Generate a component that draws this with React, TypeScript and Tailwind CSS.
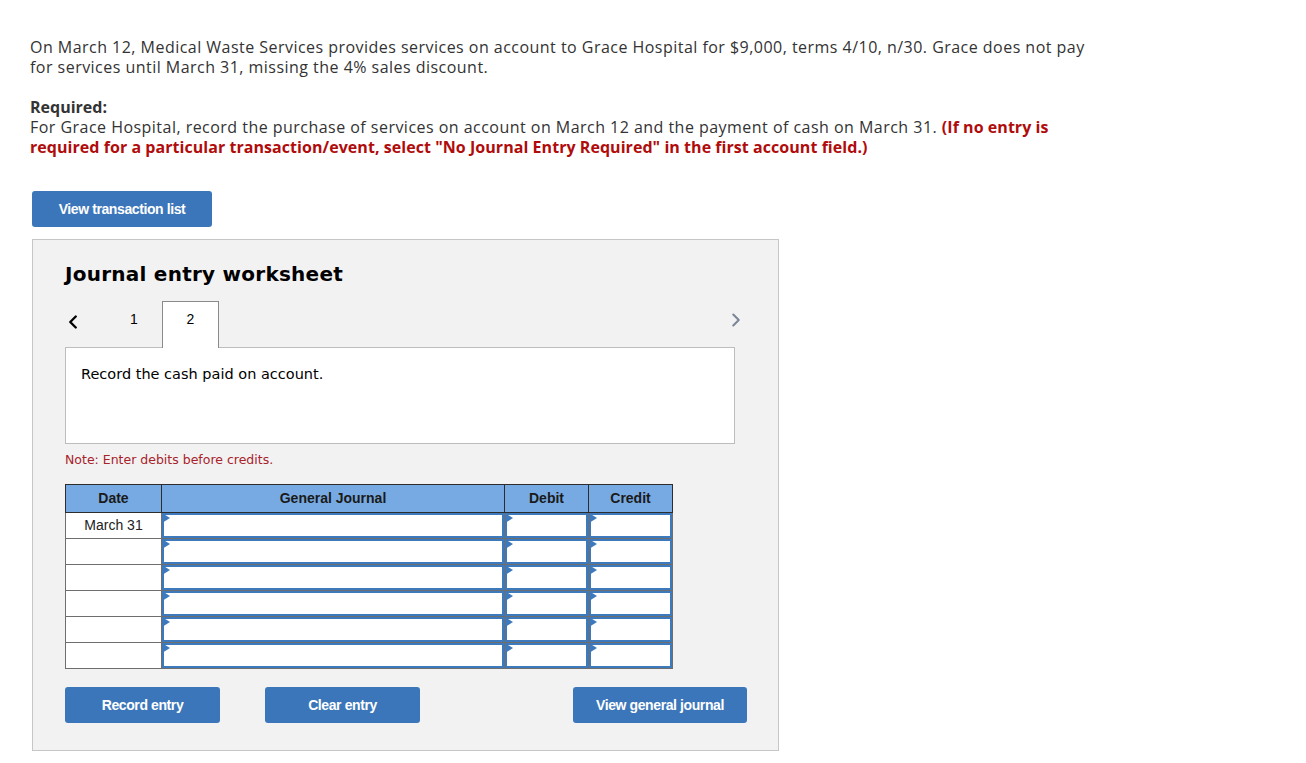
import { ChevronLeft, ChevronRight } from "lucide-react";

const rows = ["March 31", "", "", "", "", ""];

function InputCell() {
  return (
    <td className="border border-[#6e6e6e] p-0 h-[26px]">
      <div className="relative h-[25px] bg-white border-2 border-[#3c79bd]">
        <span className="absolute -left-[2px] -top-[2px] w-0 h-0 border-t-[5px] border-b-[5px] border-l-[8px] border-t-transparent border-b-transparent border-l-[#3c79bd]" />
      </div>
    </td>
  );
}

export default function App() {
  return (
    <div className="min-h-screen bg-white font-['Open_Sans',sans-serif] text-[#333]">
      <div className="pl-[30px] pt-[37px]">
        {/* Problem text */}
        <p className="text-[16px] leading-[20px] tracking-[0.47px] whitespace-nowrap">
          On March 12, Medical Waste Services provides services on account to Grace Hospital for $9,000, terms 4/10, n/30. Grace does not pay
          <br />
          for services until March 31, missing the 4% sales discount.
        </p>
        <p className="mt-[20px] text-[16px] leading-[20px] font-bold">Required:</p>
        <p className="text-[16px] leading-[20px] tracking-[0.47px] whitespace-nowrap">
          For Grace Hospital, record the purchase of services on account on March 12 and the payment of cash on March 31.{" "}
          <span className="font-bold text-[#b00c0c] tracking-[0.05px]">
            (If no entry is
            <br />
            required for a particular transaction/event, select "No Journal Entry Required" in the first account field.)
          </span>
        </p>

        <button className="mt-[34px] ml-[2px] w-[180px] h-[36px] rounded-[3px] bg-[#3b76ba] text-white text-[14px] font-bold tracking-[-0.4px] font-['Liberation_Sans',Arial,sans-serif]">
          View transaction list
        </button>

        {/* Worksheet */}
        <div className="mt-[12px] ml-[2px] w-[747px] h-[512px] bg-[#f2f2f2] border border-[#c6c6c6] pl-[32px] pt-[20px] font-['DejaVu_Sans',Verdana,sans-serif]">
          <h2 className="text-[20px] font-bold text-black leading-[28px] tracking-[0.25px]">Journal entry worksheet</h2>

          <div className="mt-[13px] flex items-end h-[46px] relative w-[670px]">
            <ChevronLeft size={22} strokeWidth={2.6} className="text-black mb-[14px] -ml-[3px]" />
            <span className="w-[54px] text-center text-[14px] text-black font-['Liberation_Sans',Arial,sans-serif] mb-[17px] ml-[23px]">1</span>
            <div className="w-[57px] h-[47px] bg-white border border-b-0 border-[#8a8a8a] flex items-center justify-center text-[14px] text-black font-['Liberation_Sans',Arial,sans-serif] relative top-[1px] z-10 pb-[12px] ml-px">
              2
            </div>
            <ChevronRight size={22} strokeWidth={2.2} className="text-[#7a8595] absolute right-[-12px] bottom-[16px]" />
          </div>

          <div className="w-[670px] h-[97px] bg-white border border-[#bdbdbd] px-[15px] pt-[16px] text-[14.5px] text-black">
            Record the cash paid on account.
          </div>

          <p className="mt-[8px] text-[12.5px] text-[#a8222a] leading-[16px]">Note: Enter debits before credits.</p>

          <table className="mt-[16px] border-collapse font-['Liberation_Sans',Arial,sans-serif] text-[14px]">
            <thead>
              <tr className="bg-[#77aae2] h-[28px] text-[#1a1a1a]">
                <th className="w-[96px] border border-[#2d2d2d] font-bold p-0">Date</th>
                <th className="w-[343px] border border-[#2d2d2d] font-bold p-0">General Journal</th>
                <th className="w-[84px] border border-[#2d2d2d] font-bold p-0">Debit</th>
                <th className="w-[84px] border border-[#2d2d2d] font-bold p-0">Credit</th>
              </tr>
            </thead>
            <tbody>
              {rows.map((d, i) => (
                <tr key={i} className="h-[26px]">
                  <td className="border border-[#6e6e6e] bg-white text-center text-[#222] p-0">{d}</td>
                  <InputCell />
                  <InputCell />
                  <InputCell />
                </tr>
              ))}
            </tbody>
          </table>

          <div className="mt-[18px] flex items-center font-['Liberation_Sans',Arial,sans-serif]">
            <button className="w-[155px] h-[36px] rounded-[3px] bg-[#3b76ba] text-white text-[14px] font-bold tracking-[-0.4px]">
              Record entry
            </button>
            <button className="ml-[45px] w-[155px] h-[36px] rounded-[3px] bg-[#3b76ba] text-white text-[14px] font-bold tracking-[-0.4px]">
              Clear entry
            </button>
            <button className="ml-[153px] w-[174px] h-[36px] rounded-[3px] bg-[#3b76ba] text-white text-[14px] font-bold tracking-[-0.4px]">
              View general journal
            </button>
          </div>
        </div>
      </div>
    </div>
  );
}
